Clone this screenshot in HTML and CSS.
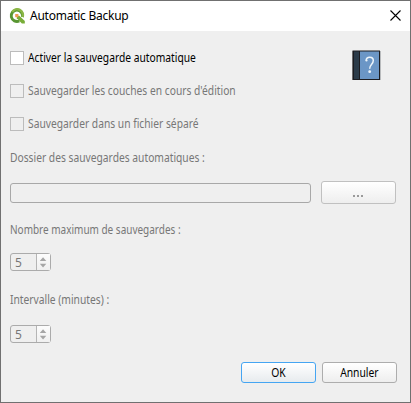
FILE: index.html
```html
<!DOCTYPE html>
<html lang="fr">
<head>
<meta charset="utf-8">
<title>Automatic Backup</title>
<link rel="stylesheet" href="styles.css">
</head>
<body>
<div class="dialog">
  <header class="titlebar">
    <svg class="logo" width="16" height="16" viewBox="0 0 16 16">
      <path d="M10.300 13A5.700 5.700 0 1 1 13.500 9" fill="none" stroke="#589632" stroke-width="2.900"/>
      <path d="M3.300 4A5.700 5.700 0 0 1 13.500 9" fill="none" stroke="#8bb646" stroke-width="2.500"/>
      <path d="M7.800 7.800h2.500l5.500 5.300v2.500h-2.900L7.800 10.300z" fill="#78ad38"/>
      <path d="M6.200 6h3.200v3.200H6.200z" fill="#ee9b52"/>
    </svg>
    <h1 class="title">Automatic Backup</h1>
    <svg class="close" width="11" height="11" viewBox="0 0 11 11"><path d="M.5.5l10 10M10.5.5l-10 10" stroke="#000" stroke-width="1.1"/></svg>
  </header>
  <main class="content">
    <div class="options">
      <div class="checks">
        <label class="check check-on"><span class="box"></span><span class="text">Activer la sauvegarde automatique</span></label>
        <label class="check"><span class="box"></span><span class="text">Sauvegarder les couches en cours d'édition</span></label>
        <label class="check"><span class="box"></span><span class="text">Sauvegarder dans un fichier séparé</span></label>
      </div>
      <svg class="help" width="29" height="31" viewBox="0 0 29 31">
        <path d="M0 1h29v29H0z" fill="#b9bbbd"/>
        <path d="M.5.5h27.500v29.500H.5z" fill="#1c1c20"/>
        <path d="M2 1.500h5v27.500H2z" fill="#2b3b49"/>
        <path d="M8 1.500h19v27.500H8z" fill="#6b96c6"/>
        <path d="M14.200 10.500C14.200 6 21.300 6 21.300 10.500C21.300 14.200 17.700 14.200 17.700 18.700" fill="none" stroke="#edf5fc" stroke-width="1.500"/>
        <circle cx="14.500" cy="10.500" r="1.100" fill="#edf5fc"/><circle cx="17.700" cy="21.700" r="1.400" fill="#edf5fc"/>
      </svg>
    </div>
    <div class="label"><span class="text">Dossier des sauvegardes automatiques :</span></div>
    <div class="path-row"><div class="field"></div><div class="button browse"><i></i><i></i><i></i></div></div>
    <div class="label"><span class="text tight">Nombre maximum de sauvegardes :</span></div>
    <div class="spin"><span class="value">5</span><svg width="14" height="16" viewBox="0 0 14 16"><path d="M3 7l3.500-4L10 7zM3 10h7l-3.500 4z" fill="#a6a6a6"/></svg></div>
    <div class="label"><span class="text">Intervalle (minutes) :</span></div>
    <div class="spin last"><span class="value">5</span><svg width="14" height="16" viewBox="0 0 14 16"><path d="M3 7l3.500-4L10 7zM3 10h7l-3.500 4z" fill="#a6a6a6"/></svg></div>
  </main>
  <footer class="actions"><div class="button ok"><span class="caption">OK</span></div><div class="button"><span class="caption">Annuler</span></div></footer>
</div>
</body>
</html>
```
FILE: styles.css
```css
* { box-sizing: border-box; }
body { margin: 0; font: 12px/16px "Noto Sans", sans-serif; color: #000; }
.dialog { width: 411px; height: 403px; border: 1px solid #707070; background: #efefef; display: flex; flex-direction: column; overflow: hidden; }
.titlebar { height: 30px; flex: none; background: #fff; display: flex; align-items: center; padding: 0 9px 0 8px; }
.logo { margin: 0 5px 1px 0; }
.title { margin: 0; font-size: 12px; font-weight: 400; letter-spacing: -.25px; white-space: nowrap; }
.close { margin: 0 0 2px auto; }
.content { padding: 18px 14px 0 9px; color: #777; white-space: nowrap; }
.options { display: flex; justify-content: space-between; height: 101px; }
.checks { display: flex; flex-direction: column; gap: 15px; }
.check { display: flex; align-items: center; gap: 4px; height: 18px; }
.check-on { color: #000; }
.box { width: 14px; height: 14px; border: 1px solid #bcbcbc; }
.check-on .box { background: #fff; }
.text { display: inline-block; transform: scaleX(.855); transform-origin: left; }
.tight { transform: scaleX(.832); }
.help { margin: 1px 15px 0 0; }
.label { height: 16px; margin-left: -.5px; }
.path-row { display: flex; align-items: center; gap: 10px; height: 23px; margin: 15px 0 18px; }
.field { width: 301px; height: 20px; border: 1px solid #a8a8a8; border-radius: 3px; }
.button { width: 75px; height: 21px; border: 1px solid #adadad; border-radius: 3px; background: linear-gradient(#fff, #eee); text-align: center; line-height: 20px; }
.caption { display: inline-block; transform: scaleX(.86); }
.browse { height: 23px; border-color: #c0c0c0; display: flex; justify-content: center; gap: 2px; padding: 13px 2px 0 0; }
.browse i { width: 2px; height: 2px; background: #9a9a9a; }
.spin { display: flex; width: 41px; height: 18px; margin: 15px 0 21px; border: 1px solid #ababab; border-radius: 3px; }
.last { margin: 17px 0 0; }
.value { width: 26px; padding-left: 4px; line-height: 18px; border-right: 1px solid #b5b5b5; }
.spin svg { flex: 1; background: linear-gradient(#fcfcfc, #f0f0f0); }
.actions { display: flex; justify-content: flex-end; gap: 6px; margin-top: auto; padding: 0 13px 19px 0; }
.ok { border-color: #45a5f2; background: linear-gradient(#fff, #e7ebee); }
```
